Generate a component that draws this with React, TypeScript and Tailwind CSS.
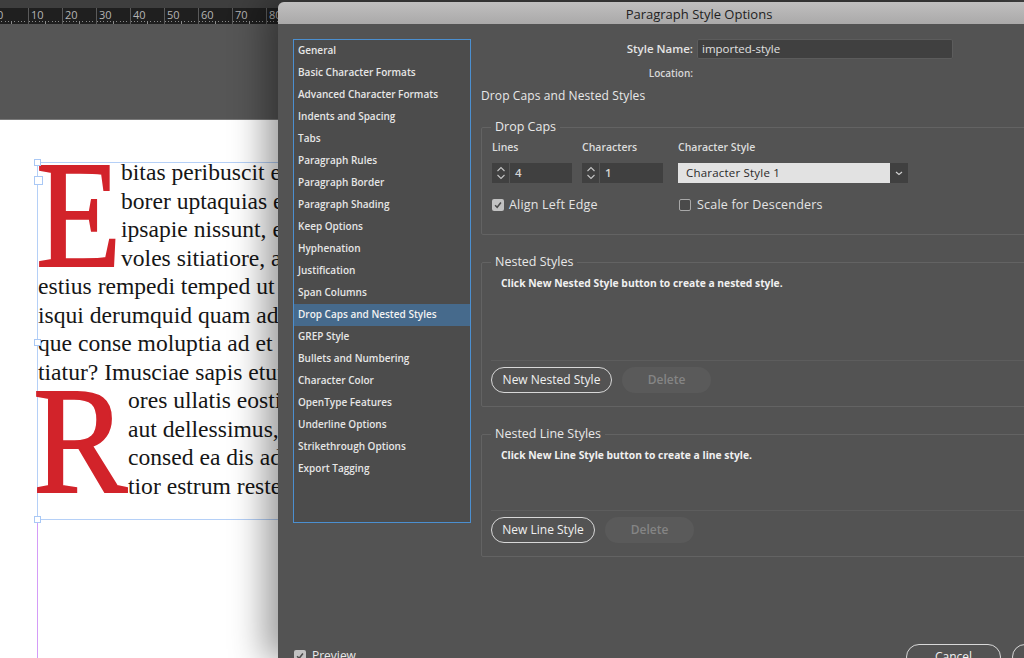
const ui = { fontFamily: '"Open Sans", "Noto Sans", sans-serif' };
const serif = { fontFamily: '"Liberation Serif", serif' };

const sections = [
  "General", "Basic Character Formats", "Advanced Character Formats", "Indents and Spacing", "Tabs",
  "Paragraph Rules", "Paragraph Border", "Paragraph Shading", "Keep Options", "Hyphenation",
  "Justification", "Span Columns", "Drop Caps and Nested Styles", "GREP Style", "Bullets and Numbering",
  "Character Color", "OpenType Features", "Underline Options", "Strikethrough Options", "Export Tagging",
];

function Ruler() {
  const labels = [0, 10, 20, 30, 40, 50, 60, 70, 80];
  return (
    <div className="h-4 bg-[#1f1f1f] flex overflow-hidden -ml-[6px] shrink-0">
      {labels.map((n) => (
        <div key={n} className="relative w-[34px] shrink-0 h-4 border-l border-[#5a5a5a] pl-[1px] text-[11px] leading-[14px] text-[#b4b4b4]">
          <span className="block pl-[1px]">{n}</span>
          <div className="absolute bottom-0 left-0 right-0 flex justify-between pr-[3px]">
            {[0, 1, 2, 3, 4, 5, 6, 7, 8, 9].map((t) => (
              <i key={t} className={t === 5 ? "block w-px h-[3px] bg-[#8a8a8a]" : "block w-px h-[1px] bg-[#8a8a8a]"} />
            ))}
          </div>
        </div>
      ))}
    </div>
  );
}

function Line({ children }: { children: string }) {
  return <div className="h-[28.5px] leading-[28.5px] whitespace-nowrap">{children}</div>;
}

function Handle({ className }: { className: string }) {
  return <div className={`absolute bg-white border border-[#a9c8f5] ${className}`} />;
}

function DocumentArea() {
  return (
    <div className="w-[278px] shrink-0 h-full flex flex-col" style={ui}>
      <div className="h-2 bg-[#3e3e3e] shrink-0" />
      <Ruler />
      <div className="h-[96px] bg-[#565656] border-b border-[#7a7a7a] shrink-0" />
      <div className="flex-1 bg-white pt-[42px] pl-[37px] overflow-hidden relative">
        <div className="relative h-[358px] w-[400px] border-l border-t border-b border-[#b5d0f7] text-[23.6px] text-[#161616]" style={serif}>
          <div className="flex h-[114px]">
            <div className="w-[85px] -ml-[2px] h-[114px] shrink-0 text-[152px] leading-[100px] text-[#d2232a] [-webkit-text-stroke:2px_#d2232a] origin-top-left scale-x-[0.92] pt-[2px]">E</div>
            <div className="-mt-[5px]">
              <Line>bitas peribuscit e</Line>
              <Line>borer uptaquias e</Line>
              <Line>ipsapie nissunt, e</Line>
              <Line>voles sitiatiore, a</Line>
            </div>
          </div>
          <div className="-mt-[5px]">
            <Line>estius rempedi temped ut</Line>
            <Line>isqui derumquid quam ad</Line>
            <Line>que conse moluptia ad et</Line>
            <Line>tiatur? Imusciae sapis etur</Line>
          </div>
          <div className="flex h-[114px]">
            <div className="w-[95px] -ml-[5px] h-[114px] shrink-0 text-[152px] leading-[106px] text-[#d2232a] [-webkit-text-stroke:2px_#d2232a] origin-top-left scale-x-[0.93] pt-[2px]">R</div>
            <div>
              <Line>ores ullatis eosti</Line>
              <Line>aut dellessimus,</Line>
              <Line>consed ea dis ad</Line>
              <Line>tior estrum reste</Line>
            </div>
          </div>
          <Handle className="-left-[4px] -top-[4px] w-[7px] h-[7px]" />
          <Handle className="-left-[4px] top-[13px] w-[9px] h-[9px]" />
          <Handle className="-left-[4px] top-[176px] w-[7px] h-[7px]" />
          <Handle className="-left-[4px] -bottom-[4px] w-[7px] h-[7px]" />
        </div>
        <div className="w-px h-[140px] bg-[#d49cf7]" />
      </div>
    </div>
  );
}

function Check({ on }: { on?: boolean }) {
  return (
    <span className={`w-[12px] h-[12px] rounded-[2px] shrink-0 flex items-center justify-center ${on ? "bg-[#c2c2c2]" : "border border-[#a8a8a8] bg-[#4a4a4a]"}`}>
      {on && (
        <svg viewBox="0 0 12 12" className="w-[10px] h-[10px]">
          <path d="M2.5 6.2 L5 8.8 L9.5 3" fill="none" stroke="#4a4a4a" strokeWidth="1.8" />
        </svg>
      )}
    </span>
  );
}

function Spin({ value, width }: { value: string; width: string }) {
  return (
    <div className={`h-5 flex bg-[#404040] ${width}`}>
      <div className="w-[18px] border-r border-[#555] flex items-center justify-center">
        <svg viewBox="0 0 10 16" className="w-[10px] h-[16px]">
          <path d="M1.5 6 L5 2.5 L8.5 6 M1.5 10 L5 13.5 L8.5 10" fill="none" stroke="#c4c4c4" strokeWidth="1.1" />
        </svg>
      </div>
      <div className="pl-[5px] text-[11.5px] leading-5 text-[#d4d4d4]">{value}</div>
    </div>
  );
}

function Group({ title, h, children }: { title: string; h: string; children: React.ReactNode }) {
  return (
    <div className={`relative w-[600px] border border-[#636363] rounded-[2px] ${h}`}>
      <div className="absolute left-[9px] -top-[9px] bg-[#535353] px-[4px] text-[12.5px] leading-[16px] text-[#e8e8e8] whitespace-nowrap">{title}</div>
      {children}
    </div>
  );
}

function Nested({ msg, label, labelW, area }: { msg: string; label: string; labelW: string; area: string }) {
  return (
    <>
      <div className={`mt-[13px] ml-[9px] border-b border-[#5d5d5d] text-[10.3px] font-bold leading-[14px] text-[#f0f0f0] pl-[10px] ${area}`}>{msg}</div>
      <div className="flex mt-[6px] ml-[9px] gap-[10px]">
        <div className={`h-[26px] rounded-full border-[1.5px] border-[#d8d8d8] flex items-center justify-center text-[12px] font-medium text-[#f0f0f0] ${labelW}`}>{label}</div>
        <div className="w-[89px] h-[26px] rounded-full bg-[#5a5a5a] flex items-center justify-center text-[12px] font-semibold text-[#858585]">Delete</div>
      </div>
    </>
  );
}

function Dialog() {
  return (
    <div className="flex-1 h-full relative flex flex-col bg-[#535353] shadow-[-14px_0_34px_rgba(0,0,0,0.38)] overflow-hidden rounded-tl-[6px] mt-[2px]" style={ui}>
      <div className="h-[22px] shrink-0 pl-[96px] bg-gradient-to-b from-[#c0bfbf] to-[#aaa9a9] text-center text-[13px] leading-[24px] text-[#222]">
        Paragraph Style Options
      </div>
      <div className="flex pt-[15px] pl-[15px] flex-1 min-h-0">
        <div className="w-[178px] h-[484px] shrink-0 border-[1.5px] border-[#4b8fd0] bg-[#4c4c4c]">
          {sections.map((s) => (
            <div key={s} className={`h-[22px] pl-[4px] text-[10px] font-semibold leading-[21px] text-[#e6e6e6] whitespace-nowrap ${s === "Drop Caps and Nested Styles" ? "bg-[#466a8c] text-[#f2f2f2]" : ""}`}>
              {s}
            </div>
          ))}
        </div>
        <div className="ml-[10px] flex-1 min-w-0">
          <div className="flex items-center h-5">
            <div className="w-[212px] text-right text-[11.5px] font-semibold text-[#e4e4e4]">Style Name:</div>
            <div className="ml-[4px] w-[256px] h-5 bg-[#404040] border border-[#5c5c5c] rounded-[2px] pl-[4px] text-[11.5px] leading-[18px] text-[#e0e0e0]">imported-style</div>
          </div>
          <div className="w-[212px] mt-[6px] text-right text-[10px] leading-[16px] font-semibold text-[#d8d8d8]">Location:</div>
          <div className="mt-[7px] text-[12px] font-medium tracking-[0.1px] leading-[16px] text-[#e8e8e8]">Drop Caps and Nested Styles</div>
          <div className="mt-[23px]">
            <Group title="Drop Caps" h="h-[108px]">
              <div className="flex pl-[10px] pt-[12px] text-[10.5px] font-semibold leading-[14px] text-[#dcdcdc]">
                <div className="w-[90px]">
                  <div>Lines</div>
                  <div className="mt-[9px]"><Spin value="4" width="w-[80px]" /></div>
                </div>
                <div className="w-[96px]">
                  <div>Characters</div>
                  <div className="mt-[9px]"><Spin value="1" width="w-[81px]" /></div>
                </div>
                <div>
                  <div>Character Style</div>
                  <div className="mt-[9px] flex h-5">
                    <div className="w-[212px] bg-[#e2e2e2] pl-[8px] text-[11.5px] font-normal tracking-[0.2px] leading-5 text-[#2a2a2a]">Character Style 1</div>
                    <div className="w-[18px] bg-[#404040] flex items-center justify-center">
                      <svg viewBox="0 0 10 10" className="w-[10px] h-[10px]">
                        <path d="M2 4 L5 6.5 L8 4" fill="none" stroke="#d0d0d0" strokeWidth="1.2" />
                      </svg>
                    </div>
                  </div>
                </div>
              </div>
              <div className="flex pl-[10px] mt-[13px] text-[12.5px] tracking-[0.2px] text-[#e4e4e4]">
                <div className="w-[187px] flex items-center gap-[5px]"><Check on />Align Left Edge</div>
                <div className="flex items-center gap-[6px]"><Check />Scale for Descenders</div>
              </div>
            </Group>
          </div>
          <div className="mt-[27px]">
            <Group title="Nested Styles" h="h-[145px]">
              <Nested msg="Click New Nested Style button to create a nested style." label="New Nested Style" labelW="w-[121px]" area="h-[85px]" />
            </Group>
          </div>
          <div className="mt-[27px]">
            <Group title="Nested Line Styles" h="h-[123px]">
              <Nested msg="Click New Line Style button to create a line style." label="New Line Style" labelW="w-[104px]" area="h-[63px]" />
            </Group>
          </div>
        </div>
      </div>
      <div className="absolute left-0 right-0 top-[642px] flex items-start pl-[16px]">
        <div className="flex items-center gap-[6px] mt-[3px] text-[12px] text-[#e8e8e8]"><Check on />Preview</div>
        <div className="ml-auto flex gap-[11px] -mr-[48px]">
          <div className="w-[95px] h-[26px] rounded-full border-[1.5px] border-[#d8d8d8] text-center text-[12px] leading-[24px] text-[#f0f0f0]">Cancel</div>
          <div className="w-[60px] h-[26px] rounded-full border-[1.5px] border-[#d8d8d8]" />
        </div>
      </div>
    </div>
  );
}

export default function App() {
  return (
    <div className="w-[1024px] h-[658px] flex overflow-hidden bg-[#3e3e3e]">
      <DocumentArea />
      <Dialog />
    </div>
  );
}
